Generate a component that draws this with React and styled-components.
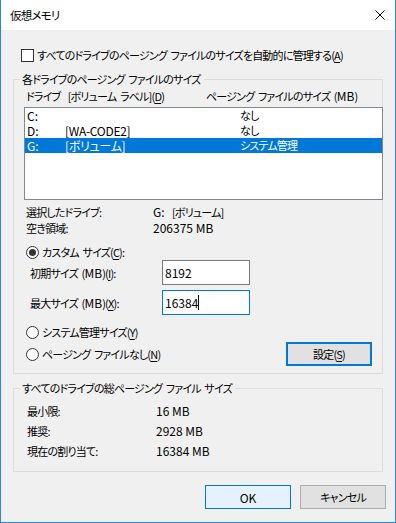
import React from 'react'
import styled, { createGlobalStyle } from 'styled-components'

const GlobalStyle = createGlobalStyle`
  html, body {
    margin: 0;
    padding: 0;
    background: #ffffff;
  }
  body {
    font-family: "Noto Sans CJK JP", "Noto Sans", sans-serif;
    font-size: 11px;
    letter-spacing: -0.8px;
    word-spacing: 2px;
    font-feature-settings: "palt";
    color: #000000;
  }
  u {
    text-underline-offset: 2px;
  }
`

const drives = [
  { letter: 'C:', label: '', size: 'なし' },
  { letter: 'D:', label: '[WA-CODE2]', size: 'なし' },
  { letter: 'G:', label: '[ボリューム]', size: 'システム管理', selected: true },
]

const totals = [
  { name: '最小限:', value: '16 MB' },
  { name: '推奨:', value: '2928 MB' },
  { name: '現在の割り当て:', value: '16384 MB' },
]

const CloseIcon = () => (
  <svg width="10" height="10" viewBox="0 0 10 10">
    <path d="M0.5 0.5 L9.5 9.5 M9.5 0.5 L0.5 9.5" stroke="#000" strokeWidth="1" fill="none" />
  </svg>
)

const App = () => {
  return (
    <>
      <GlobalStyle />
      <Window>
        <TitleBar>
          <Title>仮想メモリ</Title>
          <CloseIcon />
        </TitleBar>
        <Body>
          <CheckRow>
            <CheckBox />
            <span>すべてのドライブのページング ファイルのサイズを自動的に管理する(<u>A</u>)</span>
          </CheckRow>

          <Group>
            <Legend>各ドライブのページング ファイルのサイズ</Legend>
            <GroupBody $top={1} $bottom={7}>
              <HeaderRow>
                <HeaderCell>ドライブ&nbsp;&nbsp;[ボリューム ラベル](<u>D</u>)</HeaderCell>
                <span>ページング ファイルのサイズ (<Latin>MB</Latin>)</span>
              </HeaderRow>
              <ListBox>
                {drives.map(d => (
                  <ListRow key={d.letter} $selected={d.selected}>
                    <DriveCell>{d.letter}</DriveCell>
                    <LabelCell>{d.label}</LabelCell>
                    <span>{d.size}</span>
                  </ListRow>
                ))}
              </ListBox>
              <InfoBlock>
                <InfoRow>
                  <InfoName>選択したドライブ:</InfoName>
                  <span><Latin>G:</Latin>&nbsp;&nbsp;[ボリューム]</span>
                </InfoRow>
                <InfoRow>
                  <InfoName>空き領域:</InfoName>
                  <Latin>206375 MB</Latin>
                </InfoRow>
              </InfoBlock>

              <RadioRow $mt={8}>
                <Radio $checked />
                <span>カスタム サイズ(<u>C</u>):</span>
              </RadioRow>
              <SizeRow $mt={0}>
                <SizeLabel>初期サイズ (<Latin>MB</Latin>)(<u>I</u>):</SizeLabel>
                <SizeInput>8192</SizeInput>
              </SizeRow>
              <SizeRow $mt={5}>
                <SizeLabel>最大サイズ (<Latin>MB</Latin>)(<u>X</u>):</SizeLabel>
                <SizeInput $focused>
                  16384<Caret />
                </SizeInput>
              </SizeRow>
              <RadioRow $mt={9}>
                <Radio />
                <span>システム管理サイズ(<u>Y</u>)</span>
              </RadioRow>
              <LastRow>
                <RadioRow $mt={0}>
                  <Radio />
                  <span>ページング ファイルなし(<u>N</u>)</span>
                </RadioRow>
                <SetButton>
                  <span>設定(<u>S</u>)</span>
                </SetButton>
              </LastRow>
            </GroupBody>
          </Group>

          <Group $mt={6}>
            <Legend>すべてのドライブの総ページング ファイル サイズ</Legend>
            <GroupBody $top={5} $bottom={10}>
              {totals.map(t => (
                <TotalRow key={t.name}>
                  <TotalName>{t.name}</TotalName>
                  <Latin>{t.value}</Latin>
                </TotalRow>
              ))}
            </GroupBody>
          </Group>

          <ButtonBar>
            <DialogButton $primary>
              <Latin>OK</Latin>
            </DialogButton>
            <DialogButton>
              <span>キャンセル</span>
            </DialogButton>
          </ButtonBar>
        </Body>
      </Window>
    </>
  )
}

export default App

const Latin = styled.span`
  font-size: 12px;
  letter-spacing: 0;
  word-spacing: 0;
`

const Window = styled.div`
  width: 396px;
  height: 523px;
  box-sizing: border-box;
  border: 1px solid #2b88d8;
  border-top: none;
  display: flex;
  flex-direction: column;
  background: #f0f0f0;
`

const TitleBar = styled.div`
  height: 30px;
  flex: none;
  background: #ffffff;
  display: flex;
  align-items: center;
  justify-content: space-between;
  padding: 0 10px 0 9px;
`

const Title = styled.div`
  line-height: 16px;
  font-size: 11.5px;
`

const Body = styled.div`
  flex: 1;
  display: flex;
  flex-direction: column;
  padding-left: 12px;
`

const CheckRow = styled.div`
  margin-top: 17px;
  height: 16px;
  display: flex;
  align-items: center;
  gap: 3px;
  padding-left: 8px;
  line-height: 16px;
  white-space: nowrap;
`

const CheckBox = styled.div`
  width: 13px;
  height: 13px;
  box-sizing: border-box;
  border: 1px solid #333333;
  background: #ffffff;
`

const Group = styled.fieldset`
  margin: ${p => p.$mt ?? 8}px 0 0 0;
  padding: 0;
  width: 370px;
  min-width: 0;
  box-sizing: border-box;
  border: 1px solid #dcdcdc;
`

const Legend = styled.legend`
  margin-left: 6px;
  padding: 0 3px 0 2px;
  line-height: 16px;
  white-space: nowrap;
`

const GroupBody = styled.div`
  padding: ${p => p.$top}px 0 ${p => p.$bottom}px 10px;
  display: flex;
  flex-direction: column;
`

const HeaderRow = styled.div`
  display: flex;
  padding-left: 2px;
  line-height: 16px;
  white-space: nowrap;
`

const HeaderCell = styled.span`
  width: 180px;
`

const ListBox = styled.div`
  margin-top: 3px;
  width: 359px;
  height: 93px;
  box-sizing: border-box;
  border: 1px solid #828790;
  background: #ffffff;
  flex: none;
`

const ListRow = styled.div`
  height: 15px;
  line-height: 15px;
  display: flex;
  padding-left: 2px;
  white-space: nowrap;
  background: ${p => (p.$selected ? '#0078d7' : 'transparent')};
  color: ${p => (p.$selected ? '#ffffff' : '#000000')};
`

const DriveCell = styled.span`
  width: 38px;
  font-size: 12px;
  letter-spacing: 0;
`

const LabelCell = styled.span`
  width: 175px;
  font-size: 12px;
  letter-spacing: -0.3px;
`

const InfoBlock = styled.div`
  margin-top: 4px;
`

const InfoRow = styled.div`
  display: flex;
  padding-left: 2px;
  line-height: 16px;
`

const InfoName = styled.span`
  width: 127px;
`

const RadioRow = styled.div`
  margin-top: ${p => p.$mt}px;
  display: flex;
  align-items: center;
  gap: 3px;
  padding-left: 2px;
  line-height: 16px;
  white-space: nowrap;
`

const Radio = styled.span`
  width: 13px;
  height: 13px;
  box-sizing: border-box;
  border: 1px solid #333333;
  border-radius: 50%;
  background: #ffffff;
  display: grid;
  place-items: center;

  &::after {
    content: '';
    width: 7px;
    height: 7px;
    border-radius: 50%;
    background: ${p => (p.$checked ? '#333333' : 'transparent')};
  }
`

const SizeRow = styled.div`
  margin-top: ${p => p.$mt}px;
  display: flex;
  align-items: center;
  padding-left: 6px;
`

const SizeLabel = styled.span`
  width: 132px;
  white-space: nowrap;
`

const SizeInput = styled.div`
  width: 88px;
  height: 25px;
  box-sizing: border-box;
  border: 1px solid ${p => (p.$focused ? '#0078d7' : '#7a7a7a')};
  background: #ffffff;
  display: flex;
  align-items: center;
  padding-left: 2px;
  font-size: 12px;
  letter-spacing: 0;
`

const Caret = styled.span`
  display: inline-block;
  width: 1px;
  height: 15px;
  background: #000000;
`

const LastRow = styled.div`
  margin-top: 2px;
  height: 24px;
  display: flex;
  align-items: center;
  justify-content: space-between;
  padding-right: 10px;
`

const SetButton = styled.div`
  width: 86px;
  height: 24px;
  box-sizing: border-box;
  border: 2px solid #0078d7;
  background: #e1e1e1;
  display: flex;
  align-items: center;
  justify-content: center;
  white-space: nowrap;
`

const TotalRow = styled.div`
  display: flex;
  padding-left: 3px;
  line-height: 20px;
`

const TotalName = styled.span`
  width: 129px;
`

const ButtonBar = styled.div`
  margin-top: 13px;
  display: flex;
  justify-content: flex-end;
  gap: 9px;
  padding-right: 9px;
`

const DialogButton = styled.div`
  width: 86px;
  height: 24px;
  box-sizing: border-box;
  border: 1px solid ${p => (p.$primary ? '#0078d7' : '#adadad')};
  background: ${p => (p.$primary ? '#e5f1fb' : '#e1e1e1')};
  display: flex;
  align-items: center;
  justify-content: center;
  white-space: nowrap;
`
